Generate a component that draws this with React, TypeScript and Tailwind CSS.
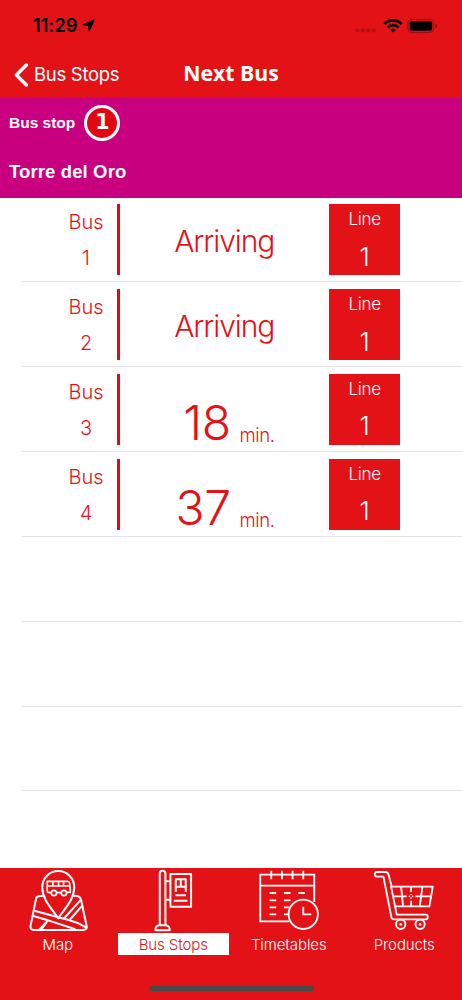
import React from "react";

const thin = "font-[Inter,'Liberation_Sans',sans-serif] font-light";

const buses = [
    { id: 1, minutes: 0, line: 1 },
    { id: 2, minutes: 0, line: 1 },
    { id: 3, minutes: 18, line: 1 },
    { id: 4, minutes: 37, line: 1 },
];

function StatusBar() {
    return (
        <div className="flex h-[51px] items-center justify-between pl-[33px] pr-[24px] text-black">
            <div className="flex items-center gap-[4px]">
                <span className="font-[Inter,sans-serif] text-[18px] font-semibold leading-none tracking-[0.2px]">
                    11:29
                </span>
                <svg width="13" height="13" viewBox="0 0 13 13">
                    <path d="M12.2 0.8 L7.2 12.2 L6.4 6.5 L0.8 5.7 Z" fill="currentColor" stroke="currentColor" strokeWidth="1" strokeLinejoin="round" />
                </svg>
            </div>
            <div className="flex items-center">
                <svg className="mt-[9px]" width="22" height="5" viewBox="0 0 22 5" fill="#b11114">
                    <circle cx="2.3" cy="2.5" r="2" />
                    <circle cx="7.8" cy="2.5" r="2" />
                    <circle cx="13.3" cy="2.5" r="2" />
                    <circle cx="18.8" cy="2.5" r="2" />
                </svg>
                <svg className="ml-[6px]" width="20" height="14" viewBox="0 0 20 14" fill="none" stroke="currentColor" strokeWidth="2.7">
                    <path d="M1.4 5.1 A12 12 0 0 1 18.6 5.1" />
                    <path d="M4.5 8.4 A7.7 7.7 0 0 1 15.5 8.4" />
                    <path d="M10 13.6 L7.2 10.8 A4 4 0 0 1 12.8 10.8 Z" fill="currentColor" stroke="none" />
                </svg>
                <svg className="ml-[4px]" width="31" height="14" viewBox="0 0 31 14">
                    <rect x="0.9" y="0.6" width="26" height="12.8" rx="3.6" fill="none" stroke="#8f1012" strokeWidth="1" />
                    <rect x="2.6" y="2.3" width="22.6" height="9.4" rx="2" fill="currentColor" />
                    <path d="M28.4 4.8 Q30.2 5.4 30.2 7 Q30.2 8.6 28.4 9.2 Z" fill="#8f1012" />
                </svg>
            </div>
        </div>
    );
}

function NavBar() {
    return (
        <div className="grid h-[47px] grid-cols-[1fr_auto_1fr] items-center text-white">
            <div className="flex items-center gap-[5px] pl-[14px]">
                <svg width="15" height="24" viewBox="0 0 15 24" fill="none" stroke="currentColor" strokeWidth="3.4" strokeLinecap="round" strokeLinejoin="round">
                    <path d="M12.4 2 L2.4 12 L12.4 22" />
                </svg>
                <span className="whitespace-nowrap font-[Inter,sans-serif] text-[18.5px] leading-none tracking-[-0.3px]">
                    Bus Stops
                </span>
            </div>
            <h1 className="pb-[4px] font-['Open_Sans',sans-serif] text-[21.2px] font-bold leading-none">Next Bus</h1>
            <span />
        </div>
    );
}

function StopHeader() {
    return (
        <div className="h-[99.5px] bg-[#c8007f] pl-[9px] pt-[6.5px] font-['Liberation_Sans',sans-serif] font-bold text-white">
            <div className="flex items-center gap-[9px]">
                <span className="text-[15.5px] leading-none">Bus stop</span>
                <span className="flex h-[36px] w-[36px] items-center justify-center rounded-full border-[3px] border-white bg-[#e30613] font-['DejaVu_Sans',sans-serif] text-[20.5px] leading-none">
                    1
                </span>
            </div>
            <p className="mt-[21px] text-[18.5px] leading-[20px] tracking-[0.12px]">Torre del Oro</p>
        </div>
    );
}

function BusRow({ bus }: { bus: (typeof buses)[number] }) {
    return (
        <div className={`${thin} flex h-[71.3px] pl-[33px] text-[#e31217]`}>
            <div className="flex w-[62px] flex-col items-center pt-[8px] text-[20px] leading-[20px] tracking-[-0.1px]">
                <span>Bus</span>
                <span className="mt-[16px]">{bus.id}</span>
            </div>
            <div className="w-[2.5px] bg-[#e30613]" />
            <div className="flex w-[209.5px] justify-center">
                {bus.minutes === 0 ? (
                    <span className="pt-[20px] text-[30px] leading-[34px] tracking-[-1.1px]">Arriving</span>
                ) : (
                    <div className="flex w-full items-baseline pt-[25px]">
                        <span className="w-[111px] text-right text-[48px] leading-[48px] tracking-[-0.5px]">
                            {bus.minutes}
                        </span>
                        <span className="ml-[9px] translate-y-[2px] text-[18.5px] leading-none tracking-[-0.4px]">min.</span>
                    </div>
                )}
            </div>
            <div className="flex w-[71.3px] flex-col items-center bg-[#e31217] pt-[5px] text-white">
                <span className="text-[17px] leading-[20px] tracking-[-0.3px]">Line</span>
                <span className="mt-[14.5px] text-[26px] leading-[26px]">{bus.line}</span>
            </div>
        </div>
    );
}

function MapIcon() {
    return (
        <svg width="60" height="63" viewBox="83.25 27 180 189" fill="none" stroke="currentColor" strokeWidth="6" strokeLinejoin="round" strokeLinecap="round">
            <path d="M174 175 C160 151 126 122 126 82 A48 49 0 0 1 222 82 C222 122 188 151 174 175 Z" />
            <path d="M128 107 L115 109 Q108 110 107 118 L91 197 Q89 210 101 210 H248 Q262 210 259 197 L242 118 Q240 110 232 108 L221 107" />
            <path d="M105 153 L205 180 Q234 187 257 202 M99 168 L143 181 L117 209 M146 182 L223 207 M123 208 L139 187 M191 176 L240 121 M208 180 L246 137 M143 181 L153 184" />
            <path d="M141 94 V64 H202 Q207 64 208 70 L210 88 V97 H202 M141 94 Q141 98 151 98 M170 98 H180 M142 78 H204 M158 65 V77 M175 65 V77 M190 65 V77" strokeWidth="5" />
            <circle cx="161" cy="99" r="8" strokeWidth="5" />
            <circle cx="191" cy="99" r="8" strokeWidth="5" />
        </svg>
    );
}

function StopIcon() {
    return (
        <svg width="60" height="63" viewBox="84.75 27 180 189" fill="none" stroke="currentColor" strokeWidth="6" strokeLinejoin="round">
            <path d="M135 195 V40 Q135 32 143 32 Q152 32 152 40 V195" />
            <path d="M122 211 Q122 197 134 196 H154 Q165 198 165 211 Z" />
            <path d="M167 42 H229 V140 H167 Z" />
            <path d="M153 64 H166 M153 119 H166" />
            <path d="M183 96 V58 H213 V96 M183 80 H213 M198 58 V80" />
            <path d="M182 106 H214 M177 122 H218" />
        </svg>
    );
}

function TimetableIcon() {
    return (
        <svg width="60" height="63" viewBox="86.25 27 180 189" fill="none" stroke="currentColor" strokeWidth="5.6">
            <path d="M252 126 V44 H90 V184 H178 M90 77 H252" />
            <path d="M123 32 V58 M155 32 V58 M187 32 V58 M219 32 V58" />
            <path d="M118 99 H138 M161 99 H181 M204 99 H224 M118 121 H138 M161 121 H181 M118 142 H138 M161 142 H178 M118 163 H138 M161 163 H175" />
            <circle cx="219" cy="163" r="44" />
            <path d="M219 140 V163 H243" />
        </svg>
    );
}

function CartIcon() {
    return (
        <svg width="60" height="63" viewBox="96.75 27 180 189" fill="none" stroke="currentColor" strokeWidth="5.6" strokeLinejoin="round">
            <path d="M150 80 L140 43 Q138 36 131 36 H106 Q99 36 99 43 Q99 50 106 50 H125 L149 172 Q150 178 157 178 H252 Q258 178 258 171 Q258 164 252 164 H165 L148 80 H273 L263 139 H160" />
            <path d="M154 109 H195 M221 109 H268 M178 80 L184 139 M208 80 V96 M208 122 V139 M242 80 L234 139" />
            <path d="M201 109 H205 M211 109 H215 M208 102 V106 M208 112 V116" strokeWidth="4" />
            <circle cx="177" cy="193" r="14" />
            <circle cx="235" cy="193" r="14" />
            <circle cx="177" cy="193" r="4" fill="currentColor" stroke="none" />
            <circle cx="235" cy="193" r="4" fill="currentColor" stroke="none" />
        </svg>
    );
}

const tabs = [
    { label: "Map", icon: <MapIcon />, active: false },
    { label: "Bus Stops", icon: <StopIcon />, active: true },
    { label: "Timetables", icon: <TimetableIcon />, active: false },
    { label: "Products", icon: <CartIcon />, active: false },
];

function TabBar() {
    return (
        <div className="flex h-[132.5px] shrink-0 flex-col justify-between bg-[#e31217] pb-[9px] pt-[1.5px] text-white">
            <div className="grid grid-cols-4">
                {tabs.map((tab) => (
                    <div key={tab.label} className="flex flex-col items-center">
                        {tab.icon}
                        <span
                            className={`${thin} mt-px h-[22px] w-[110.5px] pt-px text-center text-[15px] leading-[21px] tracking-[-0.1px] ${
                                tab.active ? "bg-white text-[#e31217]" : ""
                            }`}
                        >
                            {tab.label}
                        </span>
                    </div>
                ))}
            </div>
            <div className="mx-auto h-[5.5px] w-[165px] rounded-full bg-[#4a4a4a]" />
        </div>
    );
}

function App() {
    return (
        <div className="flex h-[1000px] w-[462px] flex-col overflow-hidden bg-white">
            <header className="bg-[#e31217]">
                <StatusBar />
                <NavBar />
            </header>
            <StopHeader />
            <main className="flex-1 overflow-hidden pl-[22px]">
                {Array.from({ length: 7 }, (_, i) => (
                    <div key={i} className="h-[84.85px] border-b border-[#e4e4e6] pt-[6.7px]">
                        {buses[i] && <BusRow bus={buses[i]} />}
                    </div>
                ))}
            </main>
            <TabBar />
        </div>
    );
}

export default App;
